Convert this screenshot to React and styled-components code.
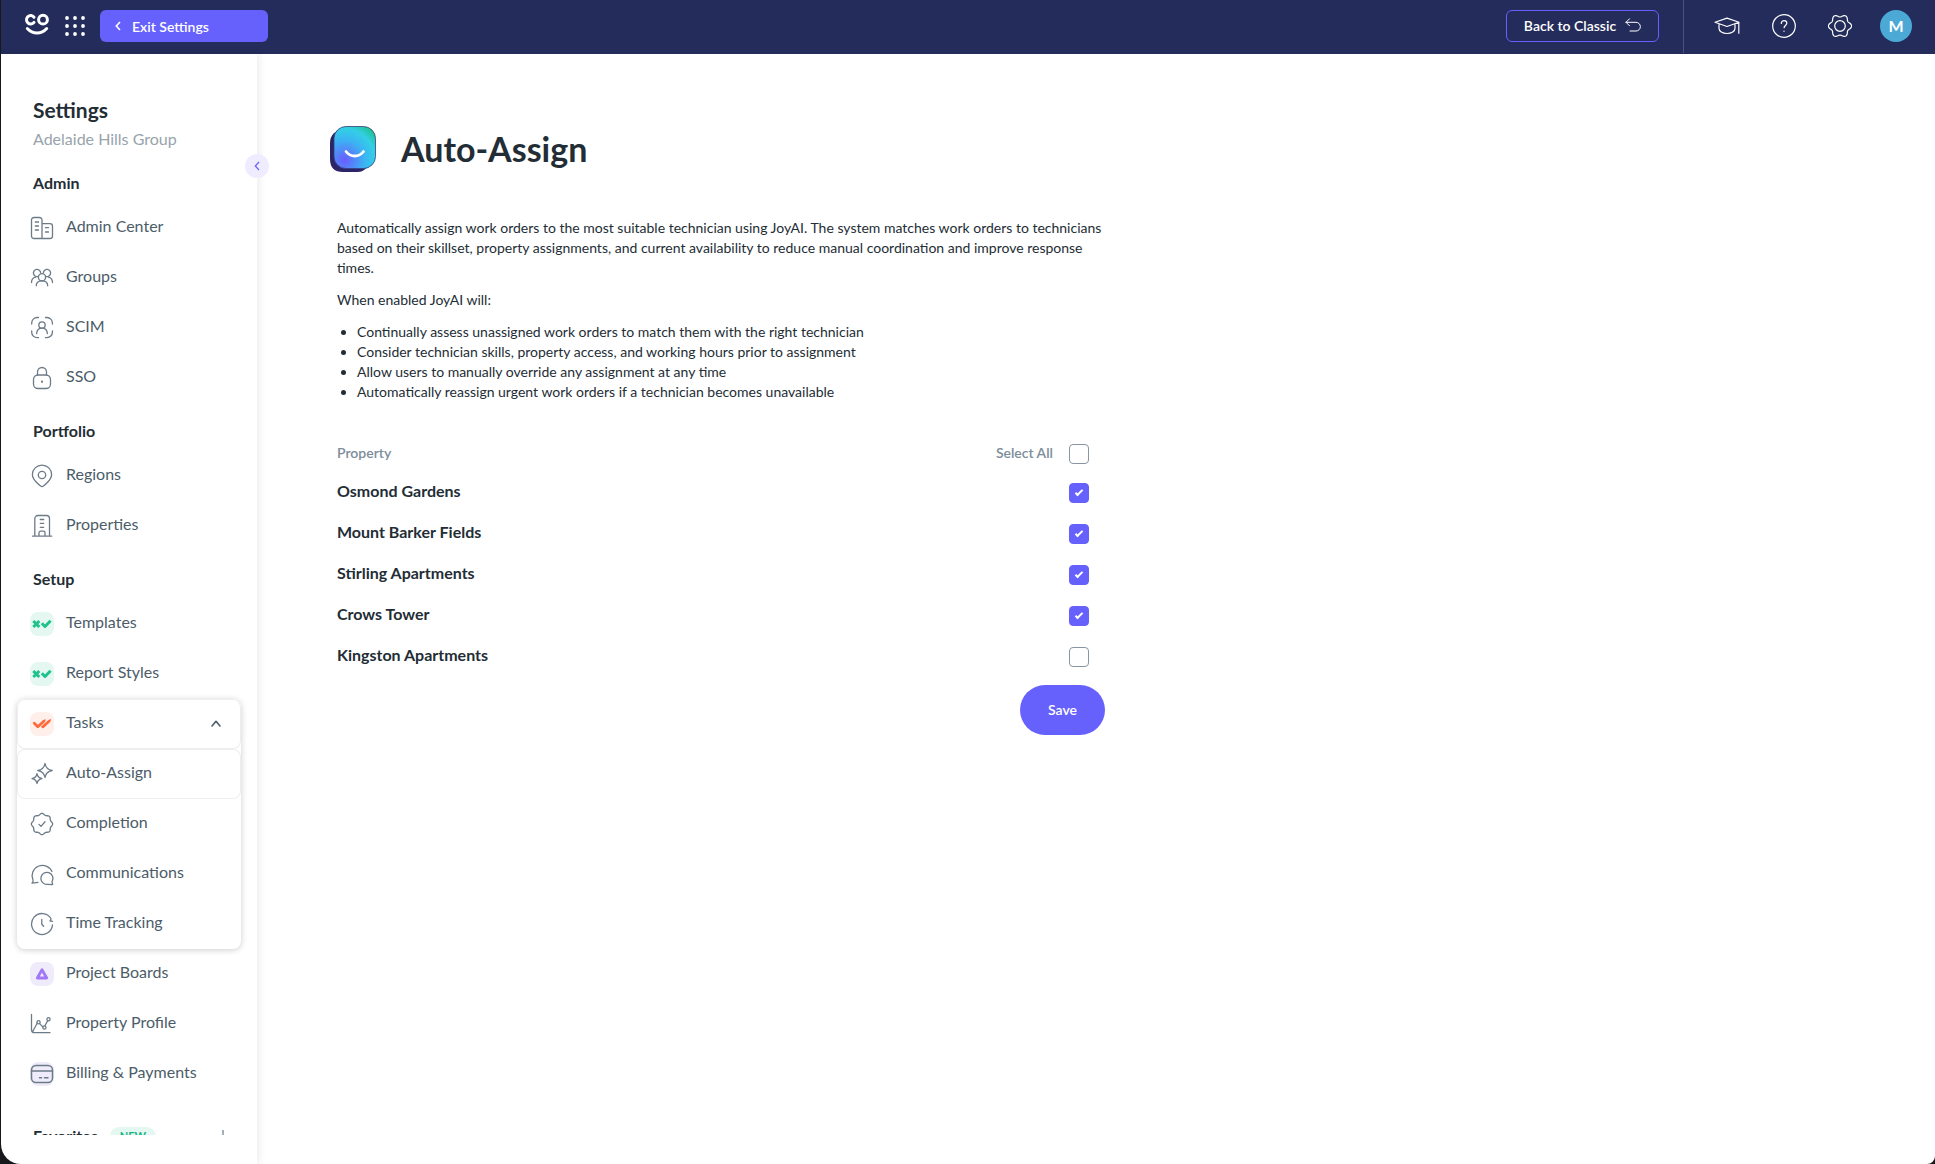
import React, { useState } from 'react';
import styled, { createGlobalStyle } from 'styled-components';

const GlobalStyle = createGlobalStyle`
	* {
		box-sizing: border-box;
	}
	body {
		margin: 0;
		background-color: #17181c;
		font-family: 'Lato', 'Open Sans', sans-serif;
		color: #232d35;
	}
	button {
		font-family: inherit;
		cursor: pointer;
	}
	a {
		color: inherit;
		text-decoration: none;
	}
`;

// closed wavy outline used by the gear and the completion badge
const wave = (lobes, radius, depth) => {
	const points = [];
	for (let i = 0; i < 120; i++) {
		const angle = (i / 120) * Math.PI * 2;
		const r = radius + depth * Math.cos(lobes * angle);
		points.push(`${(12 + r * Math.cos(angle)).toFixed(2)} ${(12 + r * Math.sin(angle)).toFixed(2)}`);
	}
	return `M${points.join('L')}Z`;
};

const Icon = ({ children, size = 24, width = 1.3 }) => (
	<svg
		width={size}
		height={size}
		viewBox="0 0 24 24"
		fill="none"
		stroke="currentColor"
		strokeWidth={width}
		strokeLinecap="round"
		strokeLinejoin="round"
		aria-hidden="true"
	>
		{children}
	</svg>
);

const icons = {
	admin: (
		<Icon>
			<path d="M12 22.5H4A2.5 2.5 0 0 1 1.5 20V4A2.5 2.5 0 0 1 4 1.5h5.5A2.5 2.5 0 0 1 12 4zM12 7.7h8a2.5 2.5 0 0 1 2.5 2.5V20a2.5 2.5 0 0 1-2.5 2.5h-8" />
			<path d="M5.3 6h3.2M5.3 10h3.2M5.3 14h3.2M15.5 11.7h3M15.5 16h3" />
		</Icon>
	),
	groups: (
		<Icon>
			<path d="M8.4 10.3A3.6 3.6 0 1 1 10.6 6.8M15.6 10.3A3.6 3.6 0 1 0 13.4 6.8" />
			<circle cx="12" cy="11.3" r="3.6" />
			<path d="M1.5 16.5c0-2.8 1.5-4.8 4.2-5.3M22.5 16.5c0-2.8-1.5-4.8-4.2-5.3M6.3 19.8c0-3.2 2.2-4.9 5.7-4.9s5.7 1.7 5.7 4.9" />
		</Icon>
	),
	scim: (
		<Icon>
			<path d="M1.7 8V7A5.5 5.5 0 0 1 7.2 1.5H8.5M15.5 1.5H17A5.5 5.5 0 0 1 22.4 7V8M22.4 15v1.2a5.5 5.5 0 0 1-5.4 5.5h-1.5M8.5 21.7H7.2a5.5 5.5 0 0 1-5.5-5.5V15" />
			<circle cx="12" cy="9" r="3.2" />
			<path d="M6.6 17.6c.3-3.3 2.3-5.4 5.4-5.4s5.1 2.1 5.4 5.4" />
		</Icon>
	),
	sso: (
		<Icon>
			<rect x="3.5" y="9" width="17" height="13.5" rx="4.5" />
			<path d="M7.5 9V6a4.5 4.5 0 0 1 9 0v3" />
			<circle cx="12" cy="15.7" r=".5" fill="currentColor" />
		</Icon>
	),
	regions: (
		<Icon>
			<path d="M12 22.6c-.8 0-9.6-6.3-9.6-12.2a9.6 9.2 0 0 1 19.2 0c0 5.9-8.8 12.2-9.6 12.2z" />
			<circle cx="12" cy="11" r="3.7" />
		</Icon>
	),
	properties: (
		<Icon>
			<path d="M2.5 22.2h19.2M4.8 22V4.5a3 3 0 0 1 3-3h8.7a3 3 0 0 1 3 3V22M9 22v-3.2a1.7 1.7 0 0 1 1.7-1.7h2.6a1.7 1.7 0 0 1 1.7 1.7V22M10.3 5.5h3.4M10.3 9.4h3.4M10.3 13.3h3.4" />
		</Icon>
	),
	inspect: (
		<Icon width={3}>
			<path strokeLinecap="butt" d="M3.3 9l6 6M9.3 9l-6 6" />
			<path strokeLinecap="butt" d="M11.8 11.3l3.2 3.2 5.6-5.7" />
		</Icon>
	),
	tasks: (
		<Icon width={2.8}>
			<path d="M4.3 11.3l3.5 3.5 6-5.5M13 14.8l6-5.5" />
			<path strokeWidth="1.6" d="M12 14.6l1 .6M14.5 8.6l.5-.6M19.8 8.4l.4-.5" />
		</Icon>
	),
	sparkles: (
		<Icon>
			<path d="M15 1.5c.7 4.3 2.5 6.2 7.2 7-4.7.8-6.5 2.7-7.2 7-.7-4.3-2.5-6.2-7.2-7 4.7-.8 6.5-2.7 7.2-7z" />
			<path d="M7 11.7c.5 3 1.8 4.4 5 4.9-3.2.5-4.5 1.9-5 4.9-.5-3-1.8-4.4-5-4.9 3.2-.5 4.5-1.9 5-4.9z" />
		</Icon>
	),
	completion: (
		<Icon>
			<path d={wave(8, 9.9, 0.7)} />
			<path d="M9 12.4l2 2 4-4.6" />
		</Icon>
	),
	chat: (
		<Icon>
			<path d="M8 20.3l-6 .8c1-1.100 1.4-2 1-3.1A10.2 10.2 0 1 1 22 9.5" />
			<path d="M22.6 22.6l-5-.3A6 6 0 1 1 22 19.5c0 1.2.6 1.8.6 3.1z" />
		</Icon>
	),
	time: (
		<Icon>
			<path d="M22.5 13A10.5 10.5 0 1 1 21 6.5l-.5 2.4M22.5 9.4l-2.7-.6M11.8 7.5v4.8l1.8 2" />
		</Icon>
	),
	boards: (
		<Icon width={2.8}>
			<path d="M12 7.8l-4.7 8.2h9.400z" />
		</Icon>
	),
	chart: (
		<Icon>
			<path d="M1.5 2.5v15.2a3 3 0 0 0 3 3H20M3 19l4.3-8M9.6 11.6l3.3 3.3M15 13.5l2.8-4.8" />
			<circle cx="8.5" cy="10.2" r="1.6" />
			<circle cx="14.4" cy="15.5" r="1.6" />
			<circle cx="18.5" cy="7.3" r="1.6" />
		</Icon>
	),
	billing: (
		<Icon width={1.5}>
			<rect x="1.5" y="3.5" width="21" height="17" rx="4.5" />
			<path d="M1.5 9h21M9.5 15.7h2M14.5 15.7h3.5" />
		</Icon>
	),
};

const sections = [
	{
		title: 'Admin',
		items: [
			{ label: 'Admin Center', icon: 'admin' },
			{ label: 'Groups', icon: 'groups' },
			{ label: 'SCIM', icon: 'scim' },
			{ label: 'SSO', icon: 'sso' },
		],
	},
	{
		title: 'Portfolio',
		items: [
			{ label: 'Regions', icon: 'regions' },
			{ label: 'Properties', icon: 'properties' },
		],
	},
	{
		title: 'Setup',
		items: [
			{ label: 'Templates', icon: 'inspect', color: '#1fc18d', tint: '#e4f8f1' },
			{ label: 'Report Styles', icon: 'inspect', color: '#1fc18d', tint: '#e4f8f1' },
			{
				label: 'Tasks',
				icon: 'tasks',
				color: '#ff6b3d',
				tint: '#ffefea',
				children: [
					{ label: 'Auto-Assign', icon: 'sparkles' },
					{ label: 'Completion', icon: 'completion' },
					{ label: 'Communications', icon: 'chat' },
					{ label: 'Time Tracking', icon: 'time' },
				],
			},
			{ label: 'Project Boards', icon: 'boards', color: '#a277f7', tint: '#efebfa' },
			{ label: 'Property Profile', icon: 'chart' },
			{ label: 'Billing & Payments', icon: 'billing', tint: '#efebfa' },
		],
	},
];

const initialProperties = [
	{ id: 'osmond', name: 'Osmond Gardens', checked: true },
	{ id: 'barker', name: 'Mount Barker Fields', checked: true },
	{ id: 'stirling', name: 'Stirling Apartments', checked: true },
	{ id: 'crows', name: 'Crows Tower', checked: true },
	{ id: 'kingston', name: 'Kingston Apartments', checked: false },
];

const NavLink = ({ item, active }) => (
	<NavItem href="#" $active={active}>
		<IconBox $color={item.color} $tint={item.tint}>
			{icons[item.icon]}
		</IconBox>
		<NavLabel>{item.label}</NavLabel>
	</NavItem>
);

const TasksMenu = ({ item }) => {
	const [open, setOpen] = useState(true);
	return (
		<Group>
			<GroupToggle type="button" aria-expanded={open} onClick={() => setOpen(!open)}>
				<IconBox $color={item.color} $tint={item.tint}>
					{icons[item.icon]}
				</IconBox>
				<NavLabel>{item.label}</NavLabel>
				<Icon size={16} width={2.4}>
					<path d={open ? 'M6 15l6-7 6 7' : 'M6 9l6 7 6-7'} />
				</Icon>
			</GroupToggle>
			{open &&
				item.children.map((child) => (
					<NavLink key={child.label} item={child} active={child.label === 'Auto-Assign'} />
				))}
		</Group>
	);
};

const TopBar = () => (
	<Header>
		<Brand href="#" aria-label="Home">
			<svg width="24" height="22" viewBox="0 0 24 22" fill="none" stroke="#fff" strokeWidth="3" strokeLinecap="round">
				<path d="M9 4.2A4.2 4.2 0 1 0 9 9.4" />
				<circle cx="18" cy="6.7" r="4.4" />
				<path d="M2.3 15.5c5.5 6 14 6 19.4 0" />
			</svg>
		</Brand>
		<AppsButton type="button" aria-label="Apps">
			<svg width="20" height="20" viewBox="0 0 20 20" fill="#fff">
				{[2, 10, 18].map((y) => [2, 10, 18].map((x) => <circle key={`${x}-${y}`} cx={x} cy={y} r="1.9" />))}
			</svg>
		</AppsButton>
		<ExitButton type="button">
			<svg width="6" height="10" viewBox="0 0 6 10" fill="none" stroke="#fff" strokeWidth="1.6">
				<path d="M5 1L1.3 5 5 9" />
			</svg>
			Exit Settings
		</ExitButton>
		<Spacer />
		<ClassicButton type="button">
			Back to Classic
			<svg width="16" height="14" viewBox="0 0 16 14" fill="none" stroke="#fff" strokeLinecap="round" strokeLinejoin="round">
				<path d="M4.5.8L1 4.3l3.5 3.5M1 4.3h10a4.2 4.2 0 0 1 0 8.7H5" />
			</svg>
		</ClassicButton>
		<Tools>
			<ToolButton type="button" aria-label="Academy">
				<svg width="26" height="24" viewBox="0 0 26 24" fill="none" stroke="#fff" strokeWidth="1.2" strokeLinejoin="round">
					<path d="M1 8.3l12-4.2 12 4.2-12 4.2zM5 10v4.5c0 2.7 3.5 5 8 5s8-2.3 8-5V10M24.8 8.3v11.5" />
				</svg>
			</ToolButton>
			<ToolButton type="button" aria-label="Help">
				<Icon width={1.2}>
					<circle cx="12" cy="12" r="11.3" />
					<path d="M9.3 9.4c0-1.7 1.2-2.7 2.8-2.7s2.7 1.1 2.7 2.6c0 2.1-2.7 2.2-2.7 4.4M12 17v.3" />
				</Icon>
			</ToolButton>
			<ToolButton type="button" aria-label="Settings">
				<Icon width={1.2}>
					<path d={wave(6, 10.3, 1.3)} />
					<circle cx="12" cy="12" r="5.3" />
				</Icon>
			</ToolButton>
			<Avatar type="button">M</Avatar>
		</Tools>
	</Header>
);

const Sidebar = () => (
	<Aside>
		<SidebarScroll>
			<SidebarTitle>Settings</SidebarTitle>
			<Company>Adelaide Hills Group</Company>
			{sections.map((section) => (
				<nav key={section.title} aria-label={section.title}>
					<SectionTitle>{section.title}</SectionTitle>
					{section.items.map((item) =>
						item.children ? (
							<TasksMenu key={item.label} item={item} />
						) : (
							<NavLink key={item.label} item={item} />
						)
					)}
				</nav>
			))}
			<Favorites>
				<h3>Favorites</h3>
				<NewBadge>NEW</NewBadge>
				<svg width="12" height="12" viewBox="0 0 12 12" stroke="#8796a2" strokeWidth="1.5">
					<path d="M6 0v12M0 6h12" />
				</svg>
			</Favorites>
		</SidebarScroll>
		<CollapseButton type="button" aria-label="Collapse sidebar">
			<svg width="6" height="10" viewBox="0 0 6 10" fill="none" stroke="#6661fd" strokeWidth="1.2">
				<path d="M5 1L1.3 5 5 9" />
			</svg>
		</CollapseButton>
	</Aside>
);

const App = () => {
	const [properties, setProperties] = useState(initialProperties);
	const allChecked = properties.every((property) => property.checked);

	const toggle = (id) =>
		setProperties(properties.map((p) => (p.id === id ? { ...p, checked: !p.checked } : p)));

	const toggleAll = () => setProperties(properties.map((p) => ({ ...p, checked: !allChecked })));

	return (
		<>
			<GlobalStyle />
			<Page>
				<TopBar />
				<Body>
					<Sidebar />
					<Main>
						<TitleRow>
							<svg width="46" height="46" viewBox="0 0 46 46" fill="none">
								<defs>
									<radialGradient id="joy" cx=".25" cy=".8" r=".98">
										<stop offset="0" stopColor="#6a5cff" />
										<stop offset=".5" stopColor="#3bb4f2" />
										<stop offset=".76" stopColor="#33cfe6" />
										<stop offset="1" stopColor="#1fc18d" />
									</radialGradient>
								</defs>
								<path d="M4 7l9-6h24L42 38l-8 6q-2 2-6 2H13Q0 46 0 33V17q0-6 4-10z" fill="#2b2468" />
								<rect x="4" y=".5" width="41.5" height="42" rx="12" fill="url(#joy)" stroke="#39407c" strokeWidth=".8" />
								<path d="M16 25.5c4.5 6 13 6 17.5 0" stroke="#fff" strokeWidth="2.8" strokeLinecap="round" />
							</svg>
							<h1>Auto-Assign</h1>
						</TitleRow>
						<Content>
							<Copy>
								<p>
									Automatically assign work orders to the most suitable technician using JoyAI. The system
									matches work orders to technicians based on their skillset, property assignments, and
									current availability to reduce manual coordination and improve response times.
								</p>
								<p>When enabled JoyAI will:</p>
								<ul>
									<li>Continually assess unassigned work orders to match them with the right technician</li>
									<li>Consider technician skills, property access, and working hours prior to assignment</li>
									<li>Allow users to manually override any assignment at any time</li>
									<li>Automatically reassign urgent work orders if a technician becomes unavailable</li>
								</ul>
							</Copy>
							<Table>
								<thead>
									<tr>
										<th scope="col">Property</th>
										<th scope="col">
											<SelectAll>
												<span>Select All</span>
												<Checkbox type="checkbox" checked={allChecked} onChange={toggleAll} />
											</SelectAll>
										</th>
									</tr>
								</thead>
								<tbody>
									{properties.map((property) => (
										<tr key={property.id}>
											<td>
												<label htmlFor={property.id}>{property.name}</label>
											</td>
											<td>
												<Checkbox
													type="checkbox"
													id={property.id}
													checked={property.checked}
													onChange={() => toggle(property.id)}
												/>
											</td>
										</tr>
									))}
								</tbody>
							</Table>
							<Actions>
								<SaveButton type="button">Save</SaveButton>
							</Actions>
						</Content>
					</Main>
				</Body>
			</Page>
		</>
	);
};

export default App;

const Page = styled.div`
	display: flex;
	flex-direction: column;
	height: 100vh;
	margin-left: 1px;
	background-color: white;
	border-radius: 0 0 8px 20px;
	overflow: hidden;
`;

const Header = styled.header`
	display: flex;
	align-items: center;
	flex-shrink: 0;
	height: 54px;
	padding: 0 23px 2px 24px;
	background-color: #242c5b;
	color: white;
`;

const Brand = styled.a`
	display: flex;
	padding-bottom: 4px;
`;

const AppsButton = styled.button`
	display: flex;
	margin: 0 15px 0 16px;
	padding: 0;
	border: none;
	background: none;
`;

const ExitButton = styled.button`
	display: flex;
	align-items: center;
	gap: 11px;
	width: 168px;
	height: 32px;
	padding: 0 15px;
	border: none;
	border-radius: 6px;
	background-color: #6661fd;
	color: white;
	font-size: 14px;
	font-weight: 600;
`;

const Spacer = styled.div`
	flex: 1;
`;

const ClassicButton = styled.button`
	display: flex;
	align-items: center;
	justify-content: center;
	gap: 9px;
	width: 153px;
	height: 32px;
	padding: 0 0 2px;
	border: 1px solid #6661fd;
	border-radius: 6px;
	background: none;
	color: white;
	font-size: 14px;
	font-weight: 600;
`;

const Tools = styled.div`
	display: flex;
	align-items: center;
	gap: 32px;
	height: 54px;
	margin-left: 24px;
	padding-left: 30px;
	border-left: 1px solid #4b5179;
`;

const ToolButton = styled.button`
	display: flex;
	padding: 0;
	border: none;
	background: none;
	color: white;
`;

const Avatar = styled.button`
	width: 32px;
	height: 32px;
	margin-left: -4px;
	padding: 0 0 2px;
	border: none;
	border-radius: 50%;
	background-color: #4ca9d6;
	color: white;
	font-size: 16px;
	font-weight: bold;
`;

const Body = styled.div`
	display: flex;
	flex: 1;
	min-height: 0;
`;

const Aside = styled.aside`
	position: relative;
	display: flex;
	flex-shrink: 0;
	width: 256px;
	padding-bottom: 29px;
	box-shadow: 2px 0 8px rgba(0, 0, 0, 0.08);
`;

const SidebarScroll = styled.div`
	flex: 1;
	padding: 44px 16px 0;
	overflow: hidden;
`;

const SidebarTitle = styled.h2`
	margin: 0 16px 5px;
	font-size: 21px;
	line-height: 24px;
`;

const Company = styled.p`
	margin: 0 16px 20px;
	color: #98a3ab;
	font-size: 16px;
	line-height: 24px;
`;

const SectionTitle = styled.h3`
	margin: 0 16px 8px;
	font-size: 16px;
	line-height: 24px;
	nav + nav > & {
		margin-top: 16px;
	}
`;

const NavItem = styled.a`
	display: flex;
	align-items: center;
	gap: 12px;
	height: 50px;
	padding-left: 13px;
	border-radius: 8px;
	color: #4c5c69;
	font-size: 16px;
	box-shadow: ${(props) => (props.$active ? 'inset 0 0 0 1px #eceeef' : 'none')};
`;

const NavLabel = styled.span`
	flex: 1;
	padding-bottom: 5px;
`;

const IconBox = styled.span`
	display: flex;
	border-radius: 8px;
	background-color: ${(props) => props.$tint || 'transparent'};
	color: ${(props) => props.$color || '#6c7b88'};
`;

const Group = styled.div`
	border-radius: 8px;
	box-shadow: 0 1px 6px rgba(0, 0, 0, 0.2);
`;

const GroupToggle = styled.button`
	display: flex;
	align-items: center;
	gap: 12px;
	width: 100%;
	height: 50px;
	padding: 0 17px 0 13px;
	border: none;
	border-radius: 8px;
	background: white;
	box-shadow: inset 0 0 0 1px #eceeef;
	color: #4c5c69;
	font-size: 16px;
	text-align: left;
`;

const Favorites = styled.div`
	display: flex;
	align-items: center;
	gap: 12px;
	margin: 25px 12px 0 16px;
	h3 {
		margin: 0;
		font-size: 16px;
		line-height: 24px;
	}
	svg {
		margin-left: auto;
	}
`;

const NewBadge = styled.span`
	padding: 0 10px;
	border-radius: 9px;
	background-color: #e4f8f1;
	color: #17b583;
	font-size: 11px;
	font-weight: bold;
	line-height: 18px;
`;

// sits over the sidebar's right edge
const CollapseButton = styled.button`
	position: absolute;
	top: 100px;
	right: -12px;
	display: flex;
	align-items: center;
	justify-content: center;
	width: 24px;
	height: 24px;
	padding: 0;
	border: none;
	border-radius: 50%;
	background-color: #eeecfe;
`;

const Main = styled.main`
	flex: 1;
	min-width: 0;
	padding: 72px 73px;
`;

const TitleRow = styled.div`
	display: flex;
	align-items: center;
	gap: 25px;
	margin-bottom: 46px;
	h1 {
		margin: 0;
		font-size: 34px;
		line-height: 40px;
	}
`;

const Content = styled.div`
	max-width: 775px;
	padding-left: 7px;
`;

const Copy = styled.div`
	font-size: 14px;
	line-height: 20px;
	p {
		margin: 0 0 12px;
	}
	ul {
		margin: 0;
		padding-left: 20px;
	}
`;

const Table = styled.table`
	width: 100%;
	margin-top: 33px;
	border-collapse: collapse;
	th,
	td {
		height: 41px;
		padding: 0;
		text-align: left;
	}
	th {
		height: 37px;
		color: #7d8d9a;
		font-size: 14px;
		font-weight: 600;
	}
	td {
		font-size: 16px;
		font-weight: bold;
	}
	th:first-child {
		padding-bottom: 2px;
	}
	td:first-child {
		padding-bottom: 4px;
	}
	th:last-child,
	td:last-child {
		padding-right: 16px;
		text-align: right;
	}
`;

const SelectAll = styled.label`
	display: flex;
	align-items: center;
	justify-content: flex-end;
	gap: 16px;
	span {
		padding-bottom: 2px;
	}
`;

const Checkbox = styled.input`
	appearance: none;
	display: inline-flex;
	align-items: center;
	justify-content: center;
	width: 20px;
	height: 20px;
	margin: 0;
	border: 1px solid #8796a2;
	border-radius: 4px;
	vertical-align: middle;
	cursor: pointer;
	&:checked {
		border-color: #6661fd;
		background-color: #6661fd;
	}
	&:checked::after {
		content: '';
		width: 2px;
		height: 6px;
		margin-bottom: 2px;
		border: solid white;
		border-width: 0 2px 2px 0;
		transform: rotate(45deg);
	}
`;

const Actions = styled.div`
	display: flex;
	justify-content: flex-end;
	margin-top: 8px;
`;

const SaveButton = styled.button`
	width: 85px;
	height: 50px;
	padding: 0 0 2px;
	border: none;
	border-radius: 25px;
	background-color: #6661fd;
	color: white;
	font-size: 14px;
	font-weight: 600;
`;
